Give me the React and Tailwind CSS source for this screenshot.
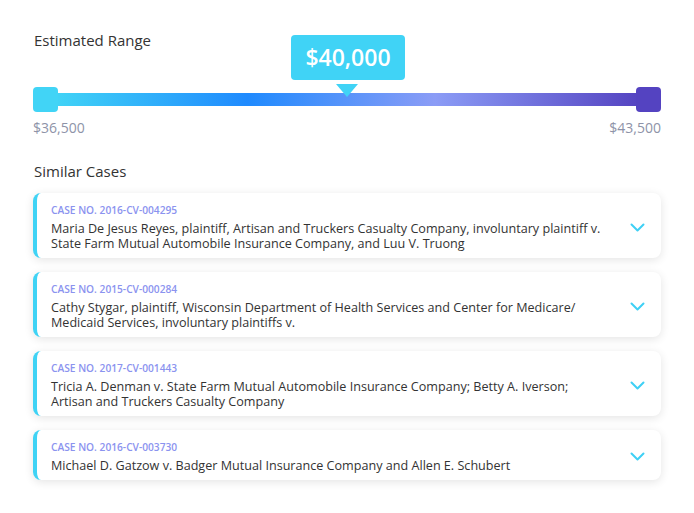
import React from "react"

const cases = [
	{
		no: "CASE NO. 2016-CV-004295",
		title: [
			"Maria De Jesus Reyes, plaintiff, Artisan and Truckers Casualty Company, involuntary plaintiff v.",
			"State Farm Mutual Automobile Insurance Company, and Luu V. Truong",
		],
	},
	{
		no: "CASE NO. 2015-CV-000284",
		title: [
			"Cathy Stygar, plaintiff, Wisconsin Department of Health Services and Center for Medicare/",
			"Medicaid Services, involuntary plaintiffs v.",
		],
	},
	{
		no: "CASE NO. 2017-CV-001443",
		title: [
			"Tricia A. Denman v. State Farm Mutual Automobile Insurance Company; Betty A. Iverson;",
			"Artisan and Truckers Casualty Company",
		],
	},
	{
		no: "CASE NO. 2016-CV-003730",
		title: ["Michael D. Gatzow v. Badger Mutual Insurance Company and Allen E. Schubert"],
	},
]

// Small cyan chevron on the right of each case card
function Chevron() {
	return (
		<svg width="15" height="9" viewBox="0 0 15 9" fill="none">
			<polyline
				points="1.5,1.5 7.5,7.5 13.5,1.5"
				stroke="#3fd0f5"
				strokeWidth="2"
				strokeLinecap="round"
				strokeLinejoin="round"
			/>
		</svg>
	)
}

function CaseCard({ item }) {
	return (
		<div className="flex items-center bg-white rounded-lg border-l-4 border-[#3fd3f5] shadow-[0_2px_10px_rgba(0,0,0,0.11)] pl-[14px] pr-[16px] pt-[10px] pb-[7px]">
			<div className="flex-1">
				<div className="text-[10.2px] leading-[14px] font-semibold text-[#8b93ef]">
					{item.no}
				</div>
				<div className="mt-[4px] text-[12.6px] leading-[15px] text-[#333]">
					{item.title.map((line, i) => (
						<div key={i}>{line}</div>
					))}
				</div>
			</div>
			<Chevron />
		</div>
	)
}

export default function App() {
	return (
		<div
			className="w-[694px] h-[513px] bg-white px-[33px] pt-[30px] overflow-hidden"
			style={{ fontFamily: '"Open Sans", "Liberation Sans", sans-serif' }}
		>
			<h2 className="text-[15px] leading-[20px] text-[#333] pl-[1px]">Estimated Range</h2>

			{/* Range slider */}
			<div className="relative mt-[37px] flex items-center h-[25px]">
				<div className="w-[25px] h-[25px] shrink-0 rounded-[4px] bg-[#41d4f6] z-10" />
				<div className="flex-1 h-[13px] -mx-[4px] bg-[linear-gradient(90deg,#41d4f6_0%,#1f8afe_33%,#8b9cf6_65%,#5443c1_100%)]" />
				<div className="w-[25px] h-[25px] shrink-0 rounded-[4px] bg-[#5443c1] z-10" />

				<div className="absolute left-[258px] -top-[52px] w-[114px] h-[45px] rounded-[4px] bg-[#40d3f6] flex items-center justify-center text-white text-[23px] font-semibold">
					$40,000
				</div>
				<div className="absolute left-[303px] -top-[3px] w-0 h-0 border-l-[11.5px] border-r-[11.5px] border-t-[13px] border-l-transparent border-r-transparent border-t-[#40d3f6] z-10" />
			</div>

			<div className="mt-[6px] flex justify-between text-[14px] leading-[20px] text-[#8e93a8]">
				<span>$36,500</span>
				<span>$43,500</span>
			</div>

			<h2 className="mt-[23px] text-[15px] leading-[20px] text-[#333] pl-[1px]">Similar Cases</h2>

			<div className="mt-[12px] flex flex-col gap-[14px]">
				{cases.map((c) => (
					<CaseCard key={c.no} item={c} />
				))}
			</div>
		</div>
	)
}
